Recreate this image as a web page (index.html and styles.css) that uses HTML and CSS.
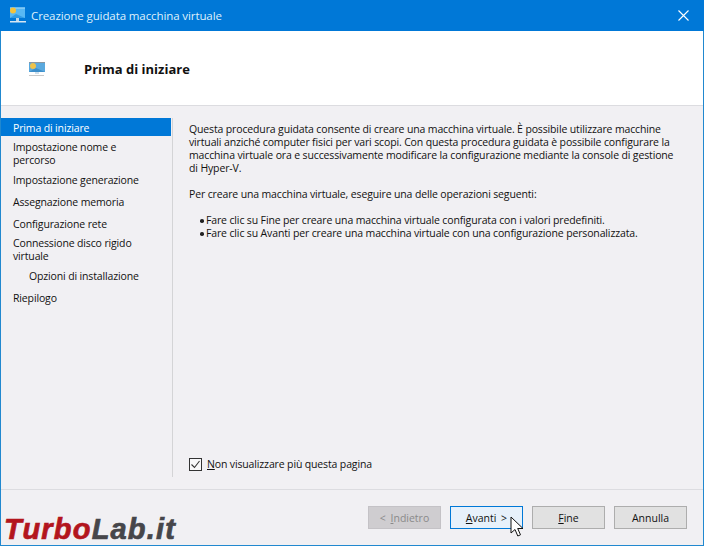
FILE: index.html
```html
<!DOCTYPE html>
<html lang="it">
<head>
<meta charset="utf-8">
<title>Creazione guidata macchina virtuale</title>
<link rel="stylesheet" href="styles.css">
</head>
<body>
<div class="window">
  <div class="titlebar">
    <svg class="title-icon" width="18" height="18" viewBox="0 0 18 18">
      <rect x="2" y="1.5" width="15" height="10.5" fill="#58b8f4"/>
      <rect x="2" y="1.5" width="15" height="1" fill="#a8dcfa"/>
      <path d="M2 12l6-4 9 4z" fill="#2f9be6"/>
      <circle cx="5" cy="4.5" r="3" fill="#f3c33c"/>
      <rect x="8" y="12" width="3" height="3" fill="#bcd6ea"/>
      <rect x="2" y="15" width="16" height="1.5" fill="#d5e6f3"/>
    </svg>
    <span class="title-text">Creazione guidata macchina virtuale</span>
    <svg class="close-icon" width="11" height="11" viewBox="0 0 11 11">
      <path d="M.5.5l10 10M10.5.5l-10 10" stroke="#fff" stroke-width="1.1" fill="none"/>
    </svg>
  </div>
  <header class="banner">
    <svg class="banner-icon" width="18" height="16" viewBox="0 0 18 16">
      <rect x="1" y="1" width="16" height="10" fill="#5aa9de"/>
      <rect x="1" y="1" width="16" height="1" fill="#8a96a0"/>
      <path d="M1 11l7-4 9 4z" fill="#3d8fcb"/>
      <circle cx="5" cy="5" r="3" fill="#eec24a"/>
      <rect x="7" y="11" width="4" height="2" fill="#cfe0ec"/>
      <rect x="1" y="14" width="15" height="1" fill="#c9c9c9"/>
    </svg>
    <h1 class="banner-title">Prima di iniziare</h1>
  </header>
  <div class="middle">
    <nav class="steps">
      <div class="step step-current">Prima di iniziare</div>
      <div class="step step-double">Impostazione nome e percorso</div>
      <div class="step">Impostazione generazione</div>
      <div class="step">Assegnazione memoria</div>
      <div class="step">Configurazione rete</div>
      <div class="step step-double">Connessione disco rigido virtuale</div>
      <div class="step step-sub">Opzioni di installazione</div>
      <div class="step">Riepilogo</div>
    </nav>
    <main class="content">
      <div class="copy">
        <p class="para">Questa procedura guidata consente di creare una macchina virtuale. È possibile utilizzare macchine virtuali anziché computer fisici per vari scopi. Con questa procedura guidata è possibile configurare la macchina virtuale ora e successivamente modificare la configurazione mediante la console di gestione di Hyper-V.</p>
        <p class="para">Per creare una macchina virtuale, eseguire una delle operazioni seguenti:</p>
        <ul class="bullets">
          <li>Fare clic su Fine per creare una macchina virtuale configurata con i valori predefiniti.</li>
          <li>Fare clic su Avanti per creare una macchina virtuale con una configurazione personalizzata.</li>
        </ul>
      </div>
      <label class="check">
        <svg class="check-box" width="13" height="13" viewBox="0 0 13 13">
          <rect x=".5" y=".5" width="12" height="12" fill="#f8f8fa" stroke="#333"/>
          <path d="M2.5 6.5l3 3 5-6.5" stroke="#333" stroke-width="1.1" fill="none"/>
        </svg>
        <span><u>N</u>on visualizzare più questa pagina</span>
      </label>
    </main>
  </div>
  <footer class="footer">
    <button class="btn btn-disabled">&lt; <u>I</u>ndietro</button>
    <button class="btn btn-default"><u>A</u>vanti &gt;</button>
    <button class="btn"><u>F</u>ine</button>
    <button class="btn">Annulla</button>
  </footer>
  <div class="watermark"><span class="wm-red">Turbo</span><span class="wm-dark">Lab.it</span></div>
  <svg class="cursor" width="15" height="22" viewBox="0 0 15 22">
    <path d="M1 1v16l4-3.5 2.8 6.5 2.7-1.2-2.8-6.3h5.3z" fill="#fff" stroke="#111" stroke-width="1"/>
  </svg>
</div>
</body>
</html>
```
FILE: styles.css
```css
* { box-sizing: border-box; }
html, body { margin: 0; padding: 0; }
body { width: 704px; height: 546px; overflow: hidden; font-family: "Open Sans", "Noto Sans", sans-serif; font-size: 10.5px; line-height: 13px; letter-spacing: -.14px; color: #111; }
.window { position: relative; width: 704px; height: 546px; display: flex; flex-direction: column; background: #f1f0f3; border: 1px solid #2188cf; border-top: 0; }
.titlebar { height: 31px; flex: none; margin: 0 -1px; background: #0078d7; color: #dff0fb; display: flex; align-items: center; padding: 0 15px 0 8px; }
.title-icon { margin-right: 5px; flex: none; margin-top: -1px; }
.title-text { font-size: 11.5px; letter-spacing: -.1px; flex: 1; }
.banner { height: 75px; flex: none; background: #fff; display: flex; align-items: center; padding: 0 0 0 27px; border-bottom: 1px solid #dcdce0; }
.banner-icon { flex: none; margin-top: 1px; }
.banner-title { margin: 1px 0 0 38px; font-size: 13px; letter-spacing: 0; line-height: 16px; font-weight: 700; color: #111; }
.middle { height: 384px; flex: none; display: flex; border-bottom: 1px solid #dcdce0; padding: 12px 0; }
.steps { width: 172px; flex: none; border-right: 1px solid #d4d4d6; }
.step { padding: 4.5px 12px; margin-right: 1px; }
.step-current { height: 18px; padding: 4px 12px 1px; margin-bottom: 3px; background: #0078d7; color: #fff; }
.step-double { padding-top: 2px; padding-bottom: 2px; }
.step-sub { padding-left: 28px; }
.content { flex: 1; display: flex; flex-direction: column; padding: 5px 24px 0 16px; }
.copy { flex: 1; }
.para { margin: 0 0 13px; }
.bullets { margin: 0; padding: 0 0 0 17px; list-style: none; }
.bullets li { position: relative; }
.bullets li::before { content: ""; position: absolute; left: -6px; top: 5px; width: 3.5px; height: 3.5px; border-radius: 50%; background: #222; }
.check { display: flex; align-items: center; gap: 5px; margin-bottom: 6px; font-size: 10.5px; }
.check-box { flex: none; }
.footer { flex: 1; display: flex; justify-content: flex-end; align-items: flex-start; gap: 9px; padding: 16px 16px 0 0; }
.btn { width: 73px; height: 23px; padding: 2px 0 0; font: inherit; word-spacing: 2px; color: #111; background: #e1e1e1; border: 1px solid #adadad; }
.btn-disabled { color: #8a8a8a; background: #cfcdd0; border-color: #c4c2c6; }
.btn-default { background: #e7f1fb; border-color: #0078d7; }
.watermark { position: absolute; left: 3px; bottom: 1px; font-family: "Liberation Sans", sans-serif; font-weight: 700; font-style: italic; font-size: 29px; line-height: 30px; letter-spacing: 1.2px; white-space: nowrap; -webkit-text-stroke: .7px currentColor; }
.wm-red { color: #b3151d; }
.wm-dark { color: #46464a; }
.cursor { position: absolute; left: 509px; top: 516px; }
```
